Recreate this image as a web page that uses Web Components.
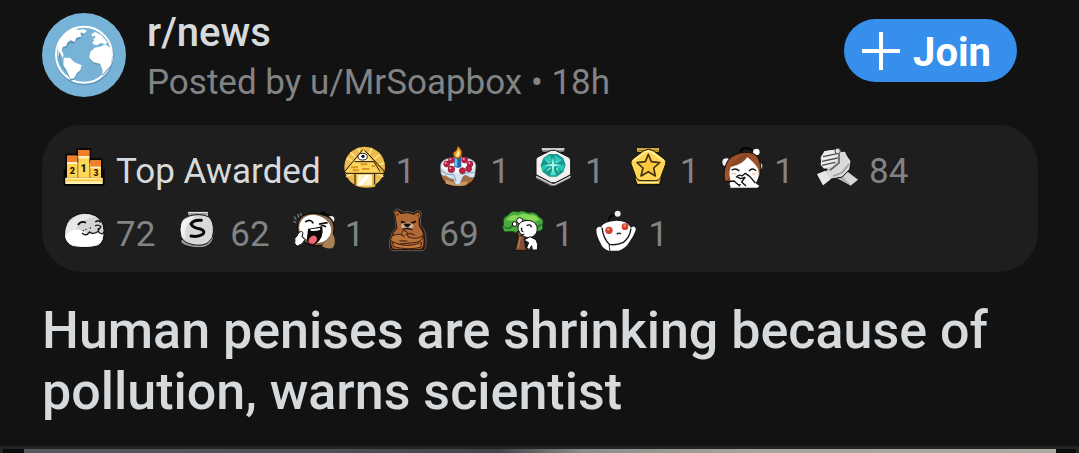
<!DOCTYPE html>
<html lang="en">
<head>
<meta charset="utf-8">
<meta name="viewport" content="width=device-width, initial-scale=1">
<title>r/news</title>
<style>
    :root {
        --page-color: #121212;
        --panel-color: #1e1e1e;
        --main-text-color: #d7dadc;
        --muted-text-color: #818384;
        --accent-color: #368feb;
    }

    body {
        margin: 0;
        background: var(--page-color);
        color: var(--main-text-color);
        font-family: Roboto, "Liberation Sans", sans-serif;
    }
</style>
</head>
<body>
<post-card>
    <post-header slot="header" time="18h">
        <community-avatar slot="avatar"></community-avatar>
        <a slot="community" href="#news">r/news</a>
        <a slot="author" href="#MrSoapbox">u/MrSoapbox</a>
        <join-button slot="action">Join</join-button>
    </post-header>
    <award-panel slot="awards">
        <award-item icon="podium" highlight>Top Awarded</award-item>
        <award-item icon="pyramid">1</award-item>
        <award-item icon="cake">1</award-item>
        <award-item icon="gem">1</award-item>
        <award-item icon="star">1</award-item>
        <award-item icon="facepalm">1</award-item>
        <award-item icon="hands">84</award-item>
        <award-item icon="seal">72</award-item>
        <award-item icon="silver">62</award-item>
        <award-item icon="laugh">1</award-item>
        <award-item icon="bear">69</award-item>
        <award-item icon="tree">1</award-item>
        <award-item icon="snoo">1</award-item>
    </award-panel>
    <post-title slot="title">Human penises are shrinking because of pollution, warns scientist</post-title>
    <post-media slot="media"></post-media>
</post-card>

<script>
// Award drawings, 126 units to a side
const AWARD_ICONS = {
    podium: `<svg viewBox="39 36 126 126">
        <path d="M41 152V103H46V56H78V40H123V70H158V103H164V152Z" fill="#090505"/>
        <path d="M51 84H153V128H51Z" fill="#a8641c"/>
        <path d="M51 62H82V128H51Z" fill="#ffd24b"/><path d="M51 62H82V81H51Z" fill="#f0802c"/>
        <path d="M85 45H118V128H85Z" fill="#ffd85a"/><path d="M85 45H118V63H85Z" fill="#f47d2c"/>
        <path d="M121 76H153V128H121Z" fill="#ffd24b"/><path d="M121 76H153V95H121Z" fill="#f0802c"/>
        <path d="M51 81H82V87H51ZM85 63H118V70H85ZM121 95H153V100H121Z" fill="#fff3c4"/>
        <path d="M46 128H158V147H46Z" fill="#fff1b4"/><path d="M46 133H158V139H46Z" fill="#ffc83c"/>
        <g font-family="Roboto, sans-serif" font-weight="900" text-anchor="middle" fill="#1b1206">
            <text x="67" y="116" font-size="27">2</text><text x="101" y="110" font-size="32">1</text><text x="138" y="122" font-size="25">3</text>
        </g></svg>`,
    pyramid: `<svg viewBox="39 36 126 126">
        <circle cx="104" cy="96" r="61" fill="#eebc4c"/>
        <g stroke="#ffe18a" stroke-width="5"><path d="M104 96L50 70M104 96L62 52M104 96L85 38M104 96L125 38M104 96L150 58M104 96L163 85M104 96L160 125M104 96L48 125"/></g>
        <path d="M75 117H136V155Q104 162 76 152Z" fill="#e2b64c"/>
        <path d="M82 119H126V152H82Z" fill="#fff0c0"/><path d="M84 148L110 119H122L92 152Z" fill="#fff"/>
        <path d="M75 117V150M134 117V148" stroke="#1b1205" stroke-width="3"/>
        <path d="M98 44L44 110L48 115H162L163 108L104 46Z" fill="#ffd45a"/>
        <path d="M104 46L163 108L160 113L132 80Z" fill="#d09a2c"/><path d="M100 48L125 79H76Z" fill="#ffe9a0"/>
        <path d="M98 44L44 110L48 115H162L163 108L104 46M74 80H132L150 110" fill="none" stroke="#1b1205" stroke-width="3"/>
        <path d="M63 97H84M92 88H112M96 102H118M125 93H136M68 106H86" stroke="#d69623" stroke-width="6"/>
        <ellipse cx="98" cy="65" rx="14" ry="10" fill="#fff" stroke="#222" stroke-width="3"/><circle cx="99" cy="64" r="5" fill="#111"/></svg>`,
    cake: `<svg viewBox="324 36 126 126">
        <path d="M332 96Q332 140 350 151Q387 164 427 150Q445 136 443 94Z" fill="#251714"/>
        <path d="M337 120Q342 150 388 154Q434 150 438 118Z" fill="#a16b3f"/><path d="M350 134Q380 148 415 138L412 151Q380 156 350 146Z" fill="#c99560"/>
        <path d="M334 93Q335 67 388 66Q440 67 441 93L437 125Q426 133 411 121Q402 120 397 137Q394 151 384 150Q374 147 374 133Q359 132 351 122Q342 126 336 118Z" fill="#dce5ee" stroke="#6d7484" stroke-width="2"/>
        <ellipse cx="388" cy="91" rx="49" ry="22" fill="#fff"/>
        <path d="M336 105Q355 123 374 118L381 139M396 118Q414 112 436 112" fill="none" stroke="#8db1cb" stroke-width="4"/>
        <g fill="#c0203f" stroke="#7a1a30" stroke-width="2"><circle cx="353" cy="87" r="9"/><circle cx="367" cy="76" r="9"/><circle cx="407" cy="75" r="9"/><circle cx="423" cy="87" r="9"/><circle cx="419" cy="101" r="9"/><circle cx="367" cy="103" r="10"/><circle cx="400" cy="107" r="9"/></g>
        <g fill="#ff9eae"><circle cx="350" cy="84" r="3"/><circle cx="364" cy="73" r="3"/><circle cx="404" cy="72" r="3"/><circle cx="421" cy="84" r="3"/><circle cx="364" cy="100" r="3"/></g>
        <path d="M376 66H397V95Q387 101 376 95Z" fill="#2464a8"/><path d="M378 69H385V94H378Z" fill="#65c4e8"/>
        <path d="M386 71Q371 68 373 52Q383 51 386 33Q402 47 398 58Q398 69 386 71Z" fill="#f69b22" stroke="#7a3512" stroke-width="3"/><path d="M386 66Q377 63 384 55L388 44Q396 59 386 66Z" fill="#fff2a0"/></svg>`,
    gem: `<svg viewBox="36 36 126 126">
        <path d="M62 38H136L132 51H67Z" fill="#e8e8e8" stroke="#111" stroke-width="3"/><path d="M67 46H134" stroke="#777" stroke-width="3"/>
        <path d="M48 122L98 149L150 122V130L104 153H93L48 130Z" fill="#777"/>
        <path d="M93 46H106L147 67Q153 72 152 79V119L106 143H94L48 119V72Q49 68 55 65Z" fill="#f1f1f0" stroke="#111" stroke-width="3"/>
        <path d="M49 124L96 148H105L152 124" stroke="#d5d5d5" stroke-width="4" fill="none"/>
        <path d="M88 57H112L130 70L137 90L130 111L110 125H88L68 111L62 91L70 69Z" fill="#17988d"/>
        <path d="M90 60L98 84L70 72ZM105 61L127 75L103 84Z" fill="#2acaba"/>
        <path d="M65 92L91 89L69 108ZM105 93L134 89L128 109Z" fill="#2cc7b5"/>
        <path d="M90 121L99 98L109 121Z" fill="#50e0ca"/>
        <path d="M99 66L103 87L126 90L103 94L99 116L95 94L71 91L95 87Z" fill="#a4f7e9"/><path d="M73 73L91 82L87 86ZM125 75L109 85L105 81ZM76 111L89 96L93 101ZM119 114L107 102L112 97Z" fill="#67ebd8"/></svg>`,
    star: `<svg viewBox="318 36 126 126">
        <path d="M345 38H417L414 52H348Z" fill="#eac350" stroke="#171207" stroke-width="3"/><path d="M352 46H412" stroke="#80601d" stroke-width="3"/>
        <path d="M340 128H422L416 149H348Z" fill="#e6b842" stroke="#171207" stroke-width="4"/><path d="M352 142H412" stroke="#fff0a0" stroke-width="4"/>
        <path d="M368 47Q382 38 397 47L430 72Q437 78 434 87L419 128Q415 137 404 137H360Q349 137 345 127L330 86Q328 78 335 72Z" fill="#ffd553" stroke="#171207" stroke-width="3"/>
        <path d="M337 78L372 52Q382 45 394 53L428 79" stroke="#fff0a2" stroke-width="4" fill="none"/>
        <path d="M382 58L391 80L416 83L398 99L403 123L382 110L360 123L366 99L348 83L373 80Z" fill="#ffc83c" stroke="#433315" stroke-width="5" stroke-linejoin="round"/></svg>`,
    facepalm: `<svg viewBox="45 36 126 126">
        <path d="M103 54Q105 38 122 39L151 50" fill="none" stroke="#050505" stroke-width="7"/><circle cx="151" cy="51" r="10" fill="#fff"/>
        <circle cx="61" cy="82" r="12" fill="#f2f2f2"/><circle cx="158" cy="94" r="11" fill="#f2f2f2"/>
        <path d="M56 138Q50 98 67 75Q82 55 115 52Q146 48 159 72Q168 95 164 118L150 140H70Z" fill="#8a4722" stroke="#170b05" stroke-width="3"/>
        <path d="M57 135Q52 98 72 75Q94 55 119 55Q99 65 76 88L66 134Z" fill="#9c522a"/><path d="M122 57Q149 57 158 82L159 108Q146 83 132 70Z" fill="#9c522a"/>
        <path d="M74 96Q111 88 124 66Q149 86 157 103Q163 130 146 147H80Q64 127 74 96Z" fill="#fff"/>
        <path d="M77 106Q88 97 100 108M129 108Q139 97 150 107" fill="none" stroke="#111" stroke-width="4"/><path d="M76 116H91M139 116H151" stroke="#ffc7b2" stroke-width="5"/>
        <path d="M90 125Q98 116 108 123L117 115L131 124L149 145L160 153L154 158H73Q65 151 70 139L84 138L102 151L108 145Z" fill="#fff"/>
        <path d="M73 156Q66 149 71 139L84 138L102 154M90 127Q98 116 108 123L118 115L131 124L148 144M93 125L103 131L117 127L107 141L120 153" fill="none" stroke="#101010" stroke-width="4" stroke-linejoin="round"/></svg>`,
    hands: `<svg viewBox="327 36 126 126">
        <path d="M367 119L394 98L454 133L431 154Z" fill="#b0b0b0" stroke="#111" stroke-width="3"/><path d="M402 119L419 108L453 134L432 151Z" fill="#d6d6d6"/>
        <path d="M339 67L351 47L383 42L397 41L405 51L415 48L421 62L432 78L428 103L406 126L372 132L348 153L329 116L361 104L342 94Z" fill="#c9c9c9" stroke="#111" stroke-width="3"/>
        <path d="M330 118L353 108L372 132L348 151Z" fill="#e6e6e6"/>
        <path d="M398 52L412 50L419 64L430 79L426 102L404 124L372 130L356 110L380 104L398 84Z" fill="#dadada"/>
        <path d="M344 65L354 48L387 44L392 58L391 77L380 82L378 93L351 101L341 89Z" fill="#ececec"/>
        <path d="M348 65L391 56M345 79L392 69M345 91L384 82M396 55L396 84L369 106" fill="none" stroke="#4c4c4c" stroke-width="4"/>
        <path d="M426 88L405 113L378 124" fill="none" stroke="#999" stroke-width="5"/>
        <circle cx="392" cy="48" r="8" fill="#e6e6e6" stroke="#444" stroke-width="3"/></svg>`,
    seal: `<svg viewBox="39 30 126 126">
        <path d="M43 105Q45 64 68 51Q99 30 136 47Q161 61 162 91Q165 124 145 137Q114 147 69 140Q45 129 43 105Z" fill="#d4d4d4" stroke="#0c0c0c" stroke-width="3"/>
        <path d="M47 101Q47 69 75 52Q104 35 137 50Q112 53 95 66Q72 84 71 113Z" fill="#e8e8e8"/>
        <path d="M46 108Q65 84 91 90Q115 107 157 98Q164 125 141 136Q101 144 66 136Q47 127 46 108Z" fill="#fff"/>
        <path d="M84 75Q92 61 108 68M136 66Q144 58 152 67" stroke="#090909" stroke-width="5" fill="none"/>
        <path d="M135 78Q144 72 153 80L145 91M145 84L145 95Q157 108 162 95M145 94Q130 105 119 96Q108 111 96 99" stroke="#171717" stroke-width="4" fill="none"/>
        <circle cx="100" cy="91" r="2"/><circle cx="108" cy="88" r="2"/><circle cx="121" cy="84" r="2"/></svg>`,
    silver: `<svg viewBox="384 30 126 126">
        <path d="M415 34H478V53H419Z" fill="#e3e3e3" stroke="#151515" stroke-width="3"/><path d="M420 42H475" stroke="#555" stroke-width="3"/>
        <path d="M396 119L396 129Q418 145 459 143Q483 140 493 117V101Z" fill="#999" stroke="#151515" stroke-width="3"/>
        <path d="M420 48Q452 39 478 50Q495 62 493 96Q494 115 477 128Q460 139 432 134Q404 128 396 111Q390 87 397 65Q402 54 420 48Z" fill="#d9d9d9" stroke="#151515" stroke-width="3"/>
        <path d="M397 72Q405 51 438 48Q413 68 408 93L409 117Q389 106 397 72Z" fill="#f2f2f2"/>
        <path d="M457 61Q434 58 426 72Q431 83 454 87Q471 93 461 103Q447 112 426 108" fill="none" stroke="#080808" stroke-width="9" stroke-linecap="round" stroke-linejoin="round"/></svg>`,
    laugh: `<svg viewBox="30 30 126 126">
        <path d="M36 49L43 59M47 42L51 53M34 64L43 68M57 39V48" stroke="#657d84" stroke-width="4"/>
        <path d="M112 48Q119 33 130 42L145 53" fill="none" stroke="#050505" stroke-width="8"/><circle cx="147" cy="58" r="10" fill="#eee"/>
        <path d="M47 77Q48 48 74 43Q94 36 119 44Q151 49 156 77Q159 103 143 122L128 133Q86 145 61 120Q45 105 47 77Z" fill="#8e6c4c" stroke="#160c06" stroke-width="4"/>
        <path d="M129 125Q146 117 148 94Q166 122 154 142Q141 151 119 138Z" fill="#aa8056"/>
        <path d="M53 72Q63 44 96 44Q130 49 143 73Q157 98 133 120Q106 139 72 118Q45 97 53 72Z" fill="#fff"/>
        <path d="M70 66Q86 55 94 70M111 72L137 68M112 72L132 80" fill="none" stroke="#0b0b0b" stroke-width="5"/>
        <path d="M80 88Q98 86 119 81Q125 113 98 132Q82 133 76 123Z" fill="#0d0909" stroke="#0b0707" stroke-width="4"/>
        <path d="M85 88L114 84L115 89Q100 95 86 92Z" fill="#fff"/><path d="M81 117Q93 100 103 111Q109 119 98 130Q87 135 79 126Z" fill="#ef6575"/>
        <path d="M39 122Q35 115 45 108L51 97Q60 91 63 98L60 110L69 119Q61 135 47 138Q35 134 39 122Z" fill="#fff" stroke="#111" stroke-width="3"/></svg>`,
    bear: `<svg viewBox="315 30 126 126">
        <path d="M342 47Q332 31 349 27Q360 28 364 37Q383 31 400 39Q407 28 419 35Q426 45 418 54L419 76Q435 89 435 118Q437 146 426 152H333Q322 143 326 122L334 96L345 84Z" fill="#2a1810" stroke="#8a786a" stroke-width="2"/>
        <path d="M342 47Q334 35 349 31L359 41Q379 34 400 43Q410 32 418 40Q423 47 414 56L415 77Q430 96 429 118Q431 142 420 148H338Q326 139 330 120L337 98L348 85Z" fill="#b06834" stroke="#2c170c" stroke-width="3"/>
        <path d="M344 43L353 39L351 49ZM407 46L414 42L412 52Z" fill="#663617"/><path d="M360 65L377 70M389 70L405 64" stroke="#1a0d07" stroke-width="6"/>
        <ellipse cx="379" cy="78" rx="19" ry="11" fill="#c7ad93"/><path d="M369 72H388L382 80H375ZM364 88Q380 80 395 89" fill="#120b07" stroke="#24130a" stroke-width="3"/>
        <path d="M333 108Q355 96 370 111Q356 102 367 91L378 96L381 111Q408 121 427 106Q423 128 395 128L348 133L328 121Z" fill="#bd7439" stroke="#3e2111" stroke-width="3"/>
        <path d="M335 126Q376 146 422 127L419 142Q379 151 337 140Z" fill="#c4773b" stroke="#3e2111" stroke-width="3"/><path d="M371 105Q391 95 401 107M355 123H379" stroke="#63351a" stroke-width="4" fill="none"/></svg>`,
    tree: `<svg viewBox="57 30 126 126">
        <path d="M69 96Q58 85 65 72Q60 53 78 46Q88 29 109 36Q120 29 138 39Q162 34 170 50Q189 58 181 75Q187 93 165 94Q148 98 130 92Q103 102 92 94Z" fill="#4aaa3f" stroke="#1a4e1b" stroke-width="3"/>
        <path d="M72 61Q87 39 107 47Q120 36 142 45Q166 43 171 60L151 68L127 55L99 62Z" fill="#85d957"/><path d="M68 80Q83 93 93 74M151 79Q165 89 177 72" fill="none" stroke="#237b2c" stroke-width="6"/>
        <path d="M105 95L109 110L101 147L95 151H138L131 145L127 119L134 96Z" fill="#825035" stroke="#20120a" stroke-width="3"/><path d="M115 111L108 145" stroke="#b57b52" stroke-width="4"/>
        <circle cx="98" cy="72" r="7" fill="#fff" stroke="#111" stroke-width="3"/><circle cx="113" cy="62" r="9" fill="#fff" stroke="#111" stroke-width="3"/>
        <path d="M108 88Q106 66 129 62Q158 58 165 80Q170 103 146 113Q118 115 108 88Z" fill="#fff" stroke="#111" stroke-width="3"/>
        <path d="M134 77Q145 70 149 82M120 83Q115 91 124 96M116 107L127 102" stroke="#111" stroke-width="4" fill="none"/>
        <path d="M144 110L162 119Q170 133 166 150H151L149 137L142 149L134 143L140 128L126 120Z" fill="#fff" stroke="#111" stroke-width="3"/></svg>`,
    snoo: `<svg viewBox="339 30 126 126">
        <path d="M380 62Q383 45 398 46" stroke="#050505" stroke-width="6" fill="none"/><circle cx="407" cy="41" r="9" fill="#eee"/>
        <path d="M343 88Q347 77 357 82Q364 64 404 62Q436 62 447 84Q451 78 457 80Q463 83 461 91Q455 109 442 126Q431 146 410 152H380Q362 146 355 128Q343 108 343 88Z" fill="#fff"/>
        <path d="M360 83Q364 116 382 133Q404 137 424 127Q443 114 447 86" fill="none" stroke="#151515" stroke-width="4"/>
        <path d="M382 133Q381 143 384 152" fill="none" stroke="#151515" stroke-width="3"/>
        <circle cx="381" cy="91" r="11" fill="#c8412c"/><circle cx="429" cy="80" r="10" fill="#cf432f"/>
        <circle cx="379" cy="88" r="4" fill="#fb8a63"/><circle cx="428" cy="77" r="4" fill="#fb8a63"/>
        <path d="M404 103Q411 97 417 102" stroke="#333" stroke-width="4" fill="none"/></svg>`
};

class PostCard extends HTMLElement {
    constructor() {
        super();
        this.attachShadow({ mode: 'open' });
    }

    connectedCallback() {
        this.shadowRoot.innerHTML = `
            <style>
                :host {
                    display: block;
                }

                article {
                    display: flex;
                    flex-direction: column;
                    min-height: 100vh;
                }

                .content {
                    padding: 8px 41px 24px 42px;
                }
            </style>
            <article>
                <div class="content">
                    <slot name="header"></slot>
                    <slot name="awards"></slot>
                    <slot name="title"></slot>
                </div>
                <slot name="media"></slot>
            </article>
        `;
    }
}

class PostHeader extends HTMLElement {
    constructor() {
        super();
        this.attachShadow({ mode: 'open' });
    }

    connectedCallback() {
        this.shadowRoot.innerHTML = `
            <style>
                :host {
                    display: block;
                }

                header {
                    display: flex;
                    align-items: flex-start;
                    gap: 21px;
                    padding-right: 21px;
                }

                .byline {
                    flex: 1;
                    min-width: 0;
                    font-size: 35px;
                    line-height: 50px;
                }

                .community {
                    font-size: 40px;
                    font-weight: 500;
                }

                .posted {
                    color: var(--muted-text-color);
                }

                ::slotted(a) {
                    color: inherit;
                    text-decoration: none;
                }
            </style>
            <header>
                <slot name="avatar"></slot>
                <div class="byline">
                    <div class="community"><slot name="community"></slot></div>
                    <div class="posted">Posted by <slot name="author"></slot> • <time></time></div>
                </div>
                <slot name="action"></slot>
            </header>
        `;
        this.shadowRoot.querySelector('time').textContent = this.getAttribute('time');
    }
}

class CommunityAvatar extends HTMLElement {
    constructor() {
        super();
        this.attachShadow({ mode: 'open' });
    }

    connectedCallback() {
        this.shadowRoot.innerHTML = `
            <style>
                :host {
                    display: block;
                    flex: none;
                    width: 84px;
                    height: 84px;
                    margin-top: 5px;
                }

                svg {
                    display: block;
                    width: 100%;
                    height: 100%;
                }
            </style>
            <svg viewBox="36 39 252 252" aria-hidden="true">
                <circle cx="162" cy="165" r="126" fill="#76b3d6"/>
                <circle cx="163" cy="168" r="85" fill="none" stroke="#5b95b8" stroke-width="6"/>
                <circle cx="162" cy="164" r="84" fill="#76b3d6" stroke="#fff" stroke-width="6"/>
                <g fill="#5b95b8" transform="translate(0 4)">
                    <path d="M82 137Q96 103 126 91L148 87L167 92L160 102L151 99L153 111L137 119L132 128L119 125L111 138L99 142L95 151L101 163L97 171L89 157L84 171Z"/>
                    <path d="M101 173L120 173L132 186L155 196L151 211L140 220L132 235L121 238L111 214L100 196Z"/>
                    <path d="M180 157L194 143L215 139L225 133L242 144L247 166L242 196L217 225L217 209L210 191L190 187L178 174Z"/>
                </g>
                <g fill="#fff">
                    <path d="M82 137Q94 106 120 91L138 87L147 90L160 87L171 92L162 101L152 97L153 110L139 113L134 126L122 121L112 128L109 138L99 140L95 151L101 164L98 175L90 158L84 171Z"/>
                    <path d="M101 173L120 173L132 186L155 196L151 211L140 220L132 235L121 237L111 214L100 196Z"/>
                    <path d="M180 157L194 143L215 139L225 133L242 144L247 166L242 196L217 225L217 209L210 191L190 187L178 174Z"/>
                    <path d="M184 102L196 96L214 105L232 127L227 133L212 129L201 136L192 134L186 127L193 123L190 116L198 112L193 107L187 110Z"/>
                </g>
                <path d="M87 155Q88 188 105 211" fill="none" stroke="#5b95b8" stroke-width="3"/>
            </svg>
        `;
    }
}

class JoinButton extends HTMLElement {
    constructor() {
        super();
        this.attachShadow({ mode: 'open' });
    }

    connectedCallback() {
        this.shadowRoot.innerHTML = `
            <style>
                :host {
                    display: block;
                    flex: none;
                    margin-top: 11px;
                }

                button {
                    display: flex;
                    align-items: center;
                    gap: 13px;
                    height: 63px;
                    padding: 0 26px 0 18px;
                    border: 0;
                    border-radius: 32px;
                    background: var(--accent-color);
                    color: #fff;
                    font-family: inherit;
                    font-size: 40px;
                    font-weight: 700;
                    cursor: pointer;
                }

                svg {
                    width: 38px;
                    height: 38px;
                }

                .label {
                    padding-top: 4px;
                }
            </style>
            <button type="button">
                <svg viewBox="0 0 38 38" aria-hidden="true"><path d="M19 0V38M0 19H38" stroke="#fff" stroke-width="4"/></svg>
                <span class="label"><slot></slot></span>
            </button>
        `;
    }
}

class AwardPanel extends HTMLElement {
    constructor() {
        super();
        this.attachShadow({ mode: 'open' });
    }

    connectedCallback() {
        this.shadowRoot.innerHTML = `
            <style>
                :host {
                    display: block;
                    margin-top: 17px;
                }

                .awards {
                    display: flex;
                    flex-wrap: wrap;
                    gap: 21px 22px;
                    padding: 22px 84px 20px 21px;
                    border-radius: 40px;
                    background: var(--panel-color);
                }
            </style>
            <div class="awards"><slot></slot></div>
        `;
    }
}

class AwardItem extends HTMLElement {
    constructor() {
        super();
        this.attachShadow({ mode: 'open' });
    }

    connectedCallback() {
        this.shadowRoot.innerHTML = `
            <style>
                :host {
                    display: flex;
                    align-items: center;
                    gap: 11px;
                    height: 42px;
                    color: var(--muted-text-color);
                    font-size: 35px;
                    line-height: 42px;
                    white-space: nowrap;
                }

                :host([highlight]) {
                    color: var(--main-text-color);
                }

                svg {
                    display: block;
                    width: 42px;
                    height: 42px;
                    overflow: visible;
                }

                .label {
                    padding-top: 8px;
                }
            </style>
            ${AWARD_ICONS[this.getAttribute('icon')]}
            <span class="label"><slot></slot></span>
        `;
    }
}

class PostTitle extends HTMLElement {
    constructor() {
        super();
        this.attachShadow({ mode: 'open' });
    }

    connectedCallback() {
        this.shadowRoot.innerHTML = `
            <style>
                :host {
                    display: block;
                    margin-top: 28px;
                }

                h1 {
                    margin: 0;
                    font-size: 52px;
                    font-weight: 500;
                    line-height: 61px;
                }
            </style>
            <h1><slot></slot></h1>
        `;
    }
}

class PostMedia extends HTMLElement {
    constructor() {
        super();
        this.attachShadow({ mode: 'open' });
    }

    connectedCallback() {
        this.shadowRoot.innerHTML = `
            <style>
                :host {
                    display: flex;
                    flex: 1;
                    min-height: 4px;
                    padding: 3px 3px 0;
                    background: #242424;
                }

                .frame {
                    flex: 1;
                    padding: 0 20px 0 21px;
                    background: #0c0c0e;
                }

                .photo {
                    height: 100%;
                    background: linear-gradient(90deg, #555a5e, #4a5056 30%, #3f464b 46%, #8b8c88 54%, #a5a49e 70%, #aaa9a2);
                }
            </style>
            <div class="frame"><div class="photo"></div></div>
        `;
    }
}

customElements.define('post-card', PostCard);
customElements.define('post-header', PostHeader);
customElements.define('community-avatar', CommunityAvatar);
customElements.define('join-button', JoinButton);
customElements.define('award-panel', AwardPanel);
customElements.define('award-item', AwardItem);
customElements.define('post-title', PostTitle);
customElements.define('post-media', PostMedia);
</script>
</body>
</html>
